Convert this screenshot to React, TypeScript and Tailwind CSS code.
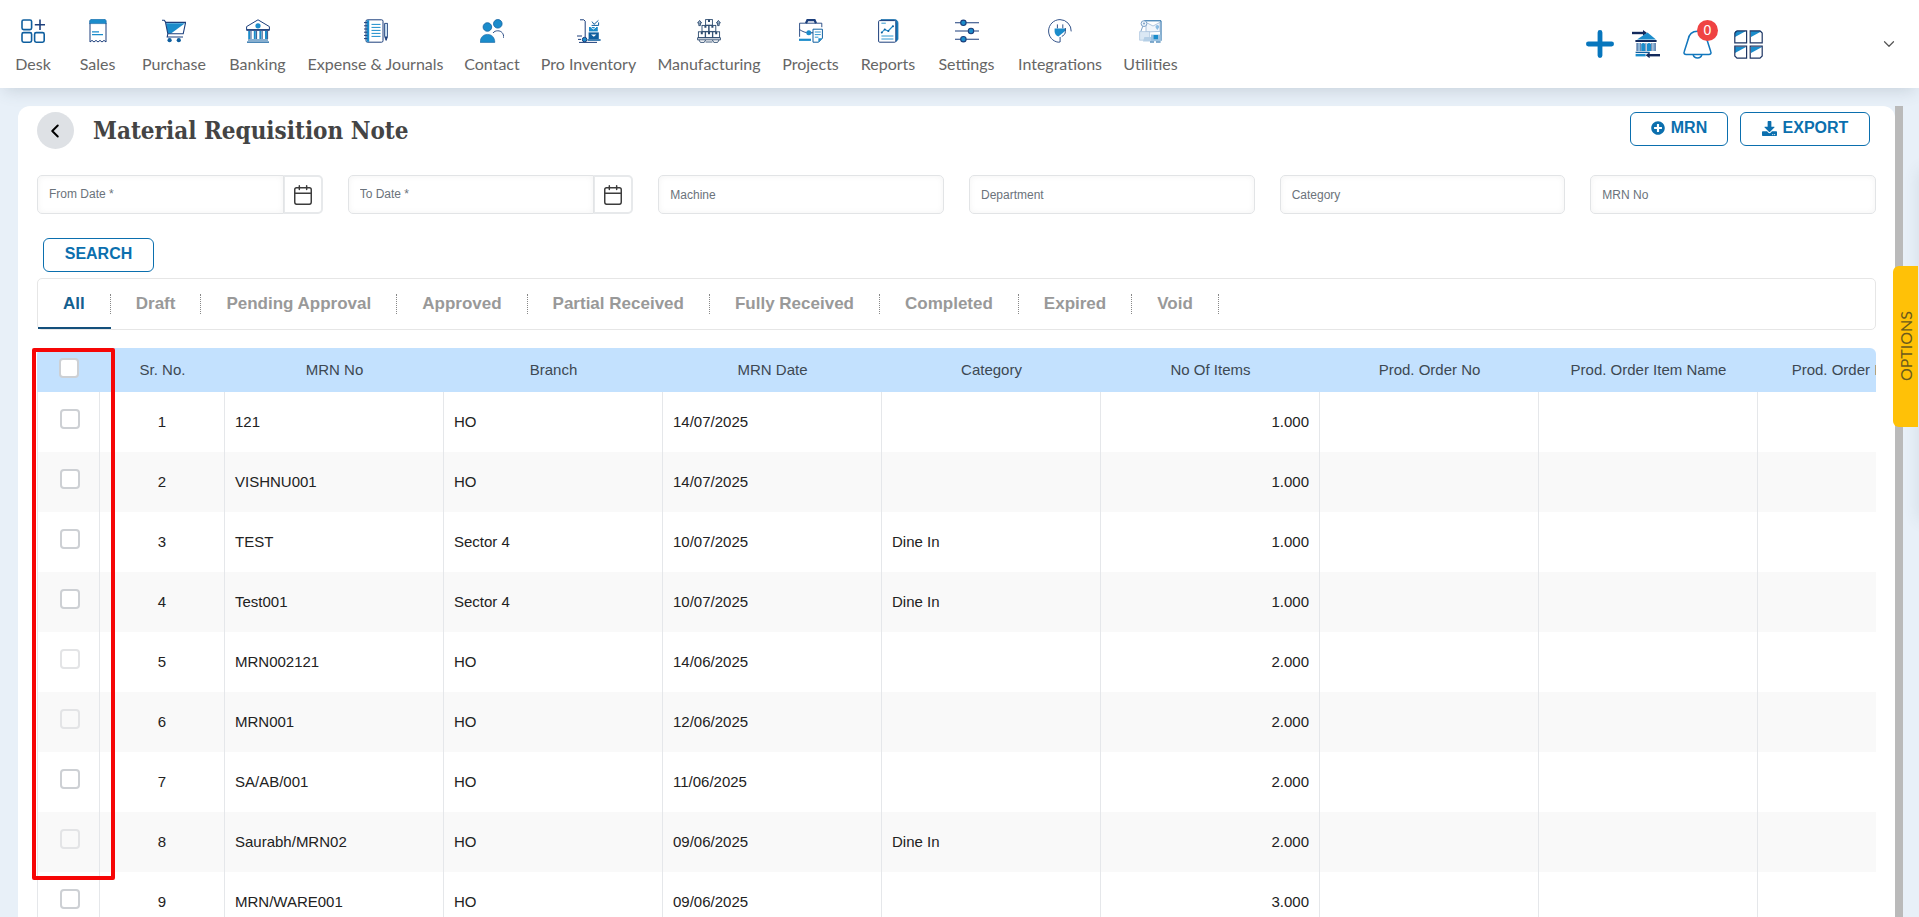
import { useState, type ReactNode } from "react";
import { Calendar, ChevronDown, ChevronLeft } from "lucide-react";
import { FaDownload, FaPlusCircle } from "react-icons/fa";

const NAVY = "#1c3f7c";
const BLUE = "#1b8ccb";
const MID = "#0f5f9f";

interface NavItem {
  label: string;
  width: string;
  icon: ReactNode;
}

const NAV_ITEMS: NavItem[] = [
  {
    label: "Desk",
    width: "w-[40px]",
    icon: (
      <g fill="none" stroke={MID} strokeWidth="1.6">
        <rect x="1" y="1" width="9.6" height="9.6" rx="1.6" />
        <rect x="1" y="13.6" width="9.6" height="9.6" rx="1.6" />
        <rect x="13.6" y="13.6" width="9.6" height="9.6" rx="1.6" />
        <path d="M19 0.5V11M13.8 5.8H24" stroke={NAVY} />
      </g>
    ),
  },
  {
    label: "Sales",
    width: "w-[43px]",
    icon: (
      <>
        <path
          d="M4 4V23l2-1.6 2 1.6 2-1.6 2 1.6 2-1.6 2 1.6 2-1.6 2 1.6V4"
          fill="#fff"
          stroke={NAVY}
        />
        <path d="M5 .2h14l1.2 1.6V4.6H3.6V1.8z" fill={BLUE} stroke={MID} strokeWidth=".6" />
        <path d="M6 12.8h7M6 15.6h11" stroke={BLUE} strokeWidth="1.2" />
      </>
    ),
  },
  {
    label: "Purchase",
    width: "w-[64px]",
    icon: (
      <>
        <path d="M4 4.2 23 4.2 9 14.5 5.6 14.5z" fill={BLUE} />
        <path
          d="M0 1.2h2.2l1.2 1.6 2.4 12h15.4l2.4-11.4H4M5.8 14.8l-.6 3.2h15.8"
          fill="none"
          stroke={NAVY}
          strokeWidth="1.1"
        />
        <circle cx="7.6" cy="21.2" r="2.1" fill={MID} />
        <circle cx="16.8" cy="21.2" r="2.1" fill={MID} />
      </>
    ),
  },
  {
    label: "Banking",
    width: "w-[57px]",
    icon: (
      <>
        <path d="M.6 10.8V7.6L12 .8l11.4 6.8v3.2z" fill="#fff" stroke={NAVY} />
        <circle cx="12" cy="6.8" r="2.6" fill={BLUE} />
        <path d="M.4 11h23.2" stroke={NAVY} strokeWidth="1.6" />
        <path d="M3.2 12v8M8.8 12v8M14.4 12v8M20 12v8" stroke={BLUE} strokeWidth="2" />
        <path d="M5 12v8M10.6 12v8M16.2 12v8M21.6 12v8" stroke={NAVY} strokeWidth=".9" />
        <path d="M2 21h20M1 23.2h22" stroke={MID} strokeWidth="1.2" />
      </>
    ),
  },
  {
    label: "Expense & Journals",
    width: "w-[133px]",
    icon: (
      <>
        <rect x="2" y=".8" width="17" height="22.4" rx="1.4" fill="#fff" stroke={NAVY} />
        <path d="M2.6 1.2h2.6v21.6H2.6z" fill={BLUE} />
        <path
          d="M0 3.6h3.4M0 6.8h3.4M0 10h3.4M0 13.2h3.4M0 16.4h3.4M0 19.6h3.4"
          stroke={NAVY}
        />
        <path d="M7.5 5.4h9M7.5 8.4h9M7.5 11.4h9M7.5 14.4h9M7.5 17.4h9" stroke={BLUE} />
        <path d="M20.6 4.4h3v13l-1.5 4-1.5-4z" fill="#cfe4f4" stroke={NAVY} strokeWidth=".9" />
        <path d="M20.6 17.4h3l-1.5 4z" fill={NAVY} />
      </>
    ),
  },
  {
    label: "Contact",
    width: "w-[54px]",
    icon: (
      <>
        <circle cx="7.4" cy="8" r="4.3" fill={BLUE} stroke={MID} strokeWidth=".8" />
        <circle cx="17.8" cy="4.8" r="4.3" fill={BLUE} stroke={MID} strokeWidth=".8" />
        <path d="M.2 23.4c0-5 3-8 7.3-8s7.3 3 7.3 8z" fill={BLUE} stroke={MID} strokeWidth=".6" />
        <path d="M13 14c1.2-1.6 2.8-2.2 4.8-2.2 3.6 0 6 2.6 6 7.2" fill="none" stroke={NAVY} strokeWidth=".9" />
      </>
    ),
  },
  {
    label: "Pro Inventory",
    width: "w-[93px]",
    icon: (
      <>
        <path d="M3 .8h3.8l1.4 1.4v16.2M0 17h5M1 20.4h3M2 23.4h18" fill="none" stroke={NAVY} />
        <path d="M10.6 21h13" stroke={MID} strokeWidth="1.6" />
        <circle cx="7.6" cy="20.6" r="2.3" fill={BLUE} stroke={NAVY} />
        <path d="M11.6 13.4h10.2V20H11.6z" fill={MID} />
        <path d="M14 15.6h5.4l-2.6 2.2z" fill="#fff" />
        <path d="M12 8h8.8v4.4H12z" fill={BLUE} />
        <path d="M14 8.2l2 2 3-2" fill="none" stroke="#fff" />
        <path d="M15 2.6l2 2.8 4.4-4M14.6 6.4h7V3.4" fill="none" stroke={MID} />
      </>
    ),
  },
  {
    label: "Manufacturing",
    width: "w-[102px]",
    icon: (
      <g fill="none" stroke="#2c4a6e" strokeWidth=".9">
        <rect x="8.6" y=".6" width="6.8" height="5.6" />
        <rect x="5" y="6.4" width="6.8" height="6" />
        <rect x="12" y="6.4" width="6.8" height="6" />
        <rect x="1.4" y="12.8" width="6.8" height="5.8" />
        <rect x="8.6" y="12.8" width="6.8" height="5.8" />
        <rect x="15.8" y="12.8" width="6.8" height="5.8" />
        <path d="M12 .6v2.4M8.4 6.4v2.4M15.4 6.4v2.4M4.8 12.8v2.4M12 12.8v2.4M19.2 12.8v2.4" strokeWidth="2" />
        <path d="M.4 18.8h23.2v2H.4zM2 21l1.4 2.4h3.8L8.6 21M15.4 21l1.4 2.4h3.8L22 21M8.6 23h6.8" />
        <path d="M.6 4 2.6 1.4 4.6 4H3.4v2.6H1.8V4zM19.4 4l2-2.6 2 2.6h-1.2v2.6h-1.6V4z" fill="#9fb6cc" />
      </g>
    ),
  },
  {
    label: "Projects",
    width: "w-[55px]",
    icon: (
      <>
        <path d="M7 4.2 8.4 1.2h7.2L17 4.2" fill="none" stroke={NAVY} strokeWidth="2.2" />
        <path d="M.6 4.2h22.2v4M.6 4.2v13.6M.6 10.6c3 2 6 3.2 9 3.2" fill="none" stroke={NAVY} strokeWidth=".9" />
        <circle cx="9.8" cy="13.8" r="2.5" fill={BLUE} />
        <path d="M0 20.8h12" stroke={BLUE} strokeWidth="2.2" />
        <path d="M12 13.8h2" stroke={NAVY} />
        <path d="M14 10.2h9.4v9l-3.8 4H14z" fill="#fff" stroke={MID} />
        <path d="M15.8 13h6M15.8 15.6h6M15.8 18.2h3.6" stroke={BLUE} strokeWidth=".9" />
        <path d="M19.4 23.2v-4h4z" fill={BLUE} />
      </>
    ),
  },
  {
    label: "Reports",
    width: "w-[54px]",
    icon: (
      <>
        <path d="M5 .6h13.6c2 0 3.4 1.6 3.4 3.4v16.6l-2 1.8V5.4C20 3.2 18.8 2 16.8 2H4z" fill={BLUE} stroke={MID} strokeWidth=".7" />
        <rect x="2.6" y="1.6" width="17.2" height="21.6" rx="1" fill="#fff" stroke={NAVY} />
        <path d="M5.4 4.2h4.4M5.4 17h12M5.4 20h12" stroke={BLUE} strokeWidth=".9" />
        <path d="M5.4 14l3.2-3.6 3.6 1.6 4.8-5" fill="none" stroke={BLUE} strokeWidth="1.1" />
        <circle cx="5.8" cy="13.6" r="1" fill={MID} />
        <circle cx="8.8" cy="10.4" r="1" fill={MID} />
        <circle cx="12.4" cy="12" r="1" fill={MID} />
        <circle cx="17" cy="7.2" r="1" fill={MID} />
      </>
    ),
  },
  {
    label: "Settings",
    width: "w-[57px]",
    icon: (
      <g stroke={NAVY} strokeWidth="1.1">
        <path d="M0 3.8h24M0 12h24M0 20.2h24" />
        <circle cx="8.4" cy="3.8" r="2.7" fill={BLUE} />
        <circle cx="16" cy="12" r="2.7" fill={BLUE} />
        <circle cx="8.4" cy="20.2" r="2.7" fill={BLUE} />
      </g>
    ),
  },
  {
    label: "Integrations",
    width: "w-[84px]",
    icon: (
      <>
        <path
          d="M23.2 12.4A11.4 11.4 0 0 0 12 .6C5.6.6.6 5.8.6 12c0 5.6 4 10.4 9.6 11.2l1.9-.2v-5"
          fill="none"
          stroke={NAVY}
          strokeWidth=".9"
        />
        <path d="M9.4 5.4v4M14.8 5.4v4" stroke={NAVY} strokeWidth=".9" />
        <path d="M6.6 9.4h10.8v2.4L10.4 17.6c-2.4-.8-3.8-2.8-3.8-5.4z" fill={BLUE} />
        <path d="M17.4 9v3.6c0 2.2-1.6 4-3.6 4.8" fill="none" stroke={NAVY} strokeWidth=".9" />
      </>
    ),
  },
  {
    label: "Utilities",
    width: "w-[51px]",
    icon: (
      <>
        <path d="M5 1.8h17v20" fill="none" stroke={MID} />
        <path d="M7 3.4l7 3.6 7-3.6v9L7 13z" fill="#f1f6fb" stroke="#8eaed0" strokeWidth=".7" />
        <circle cx="5" cy="4.6" r="2.9" fill="#eef5fb" stroke="#7fa3c8" />
        <circle cx="5" cy="4.6" r="1" fill="#7fa3c8" />
        <path d="M1.8 12.6l2-5.4" stroke="#7fa3c8" />
        <path d="M16.6 8.4a1.8 1.8 0 1 1 3.4 0L18.3 11z" fill="#8dbde4" />
        <path d="M.6 12.6h10v8.6H.6z" fill="#dbe8f4" stroke="#a8c2dc" strokeWidth=".7" />
        <path d="M5.4 18h7v4.6H4z" fill="#b5cfe6" />
        <path d="M12 15.6h9.6v6.6H12z" fill="#9cc3e2" />
        <path d="M14.6 16h4.4v4.2h-4.4z" fill={BLUE} />
        <path d="M11 23h4M17 23h4.6" stroke={MID} strokeWidth="1.2" />
      </>
    ),
  },
];

const TABS = [
  "All",
  "Draft",
  "Pending Approval",
  "Approved",
  "Partial Received",
  "Fully Received",
  "Completed",
  "Expired",
  "Void",
];

const COLUMNS = [
  "MRN No",
  "Branch",
  "MRN Date",
  "Category",
  "No Of Items",
  "Prod. Order No",
  "Prod. Order Item Name",
  "Prod. Order Item Code",
];

interface Requisition {
  no: string;
  branch: string;
  date: string;
  category?: string;
  items: string;
  locked?: boolean;
}

const ROWS: Requisition[] = [
  { no: "121", branch: "HO", date: "14/07/2025", items: "1.000" },
  { no: "VISHNU001", branch: "HO", date: "14/07/2025", items: "1.000" },
  { no: "TEST", branch: "Sector 4", date: "10/07/2025", category: "Dine In", items: "1.000" },
  { no: "Test001", branch: "Sector 4", date: "10/07/2025", category: "Dine In", items: "1.000" },
  { no: "MRN002121", branch: "HO", date: "14/06/2025", items: "2.000", locked: true },
  { no: "MRN001", branch: "HO", date: "12/06/2025", items: "2.000", locked: true },
  { no: "SA/AB/001", branch: "HO", date: "11/06/2025", items: "2.000" },
  { no: "Saurabh/MRN02", branch: "HO", date: "09/06/2025", category: "Dine In", items: "2.000", locked: true },
  { no: "MRN/WARE001", branch: "HO", date: "09/06/2025", items: "3.000" },
];

const outlineButton =
  "flex h-[34px] items-center justify-center gap-1.5 rounded-md border border-[#0b6fae] bg-white pb-0.5 text-base font-bold text-[#0b6fae]";

function QuickActions() {
  return (
    <div className="flex items-center">
      <button type="button" aria-label="Add" className="mr-[18px]">
        <svg className="h-7 w-7" viewBox="0 0 28 28">
          <path d="M14 2.4V25.6M2.4 14H25.6" stroke="#0776bd" strokeWidth="4.8" strokeLinecap="round" />
        </svg>
      </button>
      <button type="button" aria-label="Bank transfer" className="mr-[23px]">
        <svg className="h-7 w-7" viewBox="0 0 28 28">
          <path d="M0 3h12" stroke="#12295c" strokeWidth="2.4" />
          <path d="M11 0l4 3-4 3z" fill="#12295c" />
          <path d="M5 9.4 15.5 2.4 24 9.4z" fill={BLUE} />
          <path d="M3.4 11h21.2" stroke="#12295c" strokeWidth="2" />
          <path d="M4.600 13h3.200v8H4.600zM20.400 13h3.200v8h-3.200z" fill="#8db4d6" />
          <path d="M9.2 14c1-1.4 3-1.4 4 0v7h-4zM15 14c1-1.4 3-1.4 4 0v7h-4z" fill={BLUE} />
          <path d="M5 13v8M8.4 13v8M13.9 13v8M19.7 13v8M23.2 13v8" stroke={NAVY} strokeWidth=".7" />
          <path d="M3.6 22.4h14" stroke={MID} strokeWidth="1.4" />
          <path d="M3.6 25.2h10" stroke={BLUE} strokeWidth="2.4" />
          <path d="M17 25.2h11" stroke="#12295c" strokeWidth="2.4" />
          <path d="M17.6 22.2l-4 3 4 3z" fill="#12295c" />
        </svg>
      </button>
      <button type="button" aria-label="Notifications" className="relative mr-[22px]">
        <svg className="h-[29px] w-[29px]" viewBox="0 0 29 29" fill="none" stroke="#1277bd" strokeWidth="1.5">
          <path d="M14.5 1.2c-5.2 0-8.6 3.4-9.4 8.4L1.2 21.8c-.6 1.700.3 2.700 1.900 2.700h22.800c1.600 0 2.500-1 1.900-2.700L23.900 9.600c-.8-5-4.200-8.400-9.400-8.400z" />
          <path d="M10.2 24.8c.5 2 2.1 3.2 4.3 3.2s3.8-1.2 4.3-3.2" />
        </svg>
        <span className="absolute -top-[10px] left-[14px] flex h-[21px] w-[21px] items-center justify-center rounded-full bg-[#ef4343] text-sm text-white">
          0
        </span>
      </button>
      <button type="button" aria-label="Apps">
        <svg className="h-[29px] w-[29px]" viewBox="0 0 29 29">
          <path d="M1 1h11L1 7zM17 1h11L17 7zM1 17h11L1 23zM17 17h11L17 23z" fill={BLUE} />
          <g fill="none" stroke="#1d3563" strokeWidth="1.2">
            <path d="M3 .8h9.600v12H.8V3zM16.200.8H26l2.200 2.200v9.800h-12zM.8 16.200h11.800v12H3L.8 26zM16.200 16.200h12V26L26 28.200h-9.800z" />
          </g>
        </svg>
      </button>
      <button type="button" aria-label="Account" className="ml-[117px] text-[#555]">
        <ChevronDown className="h-[18px] w-[18px]" strokeWidth={1.6} />
      </button>
    </div>
  );
}

function TopNav() {
  return (
    <header className="relative z-10 flex h-[88px] shrink-0 items-center justify-between bg-white pr-[21px] pl-[13px] shadow-[0_6px_16px_-4px_rgba(60,80,100,0.2)]">
      <nav className="flex gap-[23px]">
        {NAV_ITEMS.map((item) => (
          <a
            key={item.label}
            href="#"
            className={`flex flex-col items-center gap-[11px] pt-[5px] font-[Lato,sans-serif] text-base leading-5 whitespace-nowrap text-[#666] ${item.width}`}
          >
            <svg className="h-6 w-6 shrink-0" viewBox="0 0 24 24">
              {item.icon}
            </svg>
            {item.label}
          </a>
        ))}
      </nav>
      <QuickActions />
    </header>
  );
}

const fieldBox =
  "h-[39px] w-full rounded-[5px] border border-[#e2e4e6] bg-white text-xs text-[#333] shadow-[inset_0_0_6px_rgba(0,0,0,0.05)] outline-none placeholder:text-[#6b737b]";

function DateField({ label }: { label: string }) {
  return (
    <div className="flex">
      <input
        type="text"
        aria-label={label}
        placeholder={`${label} *`}
        className={`${fieldBox} min-w-0 flex-1 rounded-r-none pr-3 pb-0.5 pl-[11px]`}
      />
      <button
        type="button"
        aria-label={`Pick ${label}`}
        className="flex h-[39px] w-[39px] shrink-0 items-center justify-center rounded-r-[5px] border-2 border-l border-[#e7e9eb] text-[#3c3c3c]"
      >
        <Calendar className="h-[22px] w-[22px]" strokeWidth={1.6} />
      </button>
    </div>
  );
}

function TextField({ label }: { label: string }) {
  return <input type="text" aria-label={label} placeholder={label} className={`${fieldBox} px-[11px]`} />;
}

function StatusTabs() {
  const [active, setActive] = useState("All");

  return (
    <div role="tablist" className="flex h-[52px] rounded-[5px] border border-[#e6e6e6]">
      {TABS.map((tab) => {
        const selected = tab === active;
        return (
          <button
            key={tab}
            type="button"
            role="tab"
            aria-selected={selected}
            onClick={() => setActive(tab)}
            className={`flex items-center border-b-2 pt-0.5 text-[17px] font-bold ${
              selected ? "border-[#14507c] text-[#14608f]" : "border-transparent text-[#999]"
            }`}
          >
            <span className="border-r border-dotted border-[#888] px-[25px] leading-5">{tab}</span>
          </button>
        );
      })}
    </div>
  );
}

const checkbox =
  "block h-5 w-5 appearance-none rounded-[4px] border-2 border-[#cdd0d4] bg-white checked:bg-[#0b6fae] disabled:border-[#e3e4e6] disabled:bg-transparent";

function RequisitionTable() {
  const cell = "border-r border-[#e5e7ea] px-[10px]";

  return (
    <div className="relative mt-[18px]">
      <div className="overflow-hidden rounded-t-md">
        <table className="w-[1939px] table-fixed border-separate border-spacing-0 text-[15px] text-[#222]">
          <colgroup>
            <col className="w-[63px]" />
            <col className="w-[125px]" />
            {COLUMNS.map((c) => (
              <col key={c} className="w-[219px]" />
            ))}
          </colgroup>
          <thead>
            <tr className="h-11 bg-[#c3e1fe] text-[#3d4852]">
              <th className="pb-1 pl-[22px]">
                <input type="checkbox" aria-label="Select all" className={checkbox} />
              </th>
              <th className="font-normal">Sr. No.</th>
              {COLUMNS.map((c) => (
                <th key={c} className="font-normal whitespace-nowrap">
                  {c}
                </th>
              ))}
            </tr>
          </thead>
          <tbody>
            {ROWS.map((row, i) => (
              <tr key={row.no} className="h-[60px] even:bg-[#f9f9f9]">
                <td className="border-x border-[#e5e7ea] pb-[6px] pl-[22px]">
                  <input
                    type="checkbox"
                    aria-label={`Select ${row.no}`}
                    disabled={row.locked}
                    className={checkbox}
                  />
                </td>
                <td className={`${cell} text-center`}>{i + 1}</td>
                <td className={cell}>{row.no}</td>
                <td className={cell}>{row.branch}</td>
                <td className={cell}>{row.date}</td>
                <td className={cell}>{row.category}</td>
                <td className={`${cell} text-right`}>{row.items}</td>
                <td className={cell} />
                <td className={cell} />
                <td className={cell} />
              </tr>
            ))}
          </tbody>
        </table>
      </div>
      {/* highlight around the selection column */}
      <div className="pointer-events-none absolute top-0 -left-[5px] h-[532px] w-[83px] rounded-xs border-4 border-[#f60606]" />
    </div>
  );
}

export default function App() {
  return (
    <div className="relative flex h-screen flex-col overflow-hidden bg-[#e8f0f8] font-['Liberation_Sans',Arial,sans-serif]">
      <TopNav />

      <div className="flex min-h-0 flex-1 pt-[18px] pr-4 pl-[18px]">
        <main className="min-w-0 flex-1 overflow-hidden rounded-t-xl bg-white px-[19px] pt-[6px]">
          <div className="flex items-start justify-between">
            <div className="flex items-center gap-[19px]">
              <button
                type="button"
                aria-label="Back"
                className="flex h-[37px] w-[37px] items-center justify-center rounded-full bg-[#dee1e5] pr-0.5 text-black"
              >
                <ChevronLeft className="h-[22px] w-[22px]" strokeWidth={2.2} />
              </button>
              <h1 className="font-['DejaVu_Serif_Condensed','DejaVu_Serif',serif] text-2xl leading-8 font-bold text-[#444]">
                Material Requisition Note
              </h1>
            </div>
            <div className="flex gap-3 pr-[6px]">
              <button type="button" className={`${outlineButton} w-[98px]`}>
                <FaPlusCircle className="h-[14px] w-[14px]" />
                MRN
              </button>
              <button type="button" className={`${outlineButton} w-[130px]`}>
                <FaDownload className="h-[15px] w-[15px]" />
                EXPORT
              </button>
            </div>
          </div>

          <form onSubmit={(e) => e.preventDefault()}>
            <div className="mt-[26px] grid grid-cols-6 gap-[25px]">
              <DateField label="From Date" />
              <DateField label="To Date" />
              <TextField label="Machine" />
              <TextField label="Department" />
              <TextField label="Category" />
              <TextField label="MRN No" />
            </div>
            <button type="submit" className={`${outlineButton} mt-6 mb-[6px] ml-[6px] w-[111px]`}>
              SEARCH
            </button>
          </form>

          <StatusTabs />
          <RequisitionTable />
        </main>
        <div className="w-2 shrink-0 bg-[#bababa]" />
      </div>

      <button
        type="button"
        className="absolute top-[266px] right-px z-20 flex h-[161px] w-[25px] items-center justify-center rounded-l-md bg-[#ffc107] font-[Lato,sans-serif] text-base text-[#6b5a1c]"
      >
        <span className="rotate-180 [writing-mode:vertical-rl]">OPTIONS</span>
      </button>
      {/* closed options drawer, only its shadow reaches the page */}
      <aside className="absolute top-[170px] left-full h-[350px] w-10 shadow-[0_0_16px_rgba(60,80,100,0.12)]" />
    </div>
  );
}
